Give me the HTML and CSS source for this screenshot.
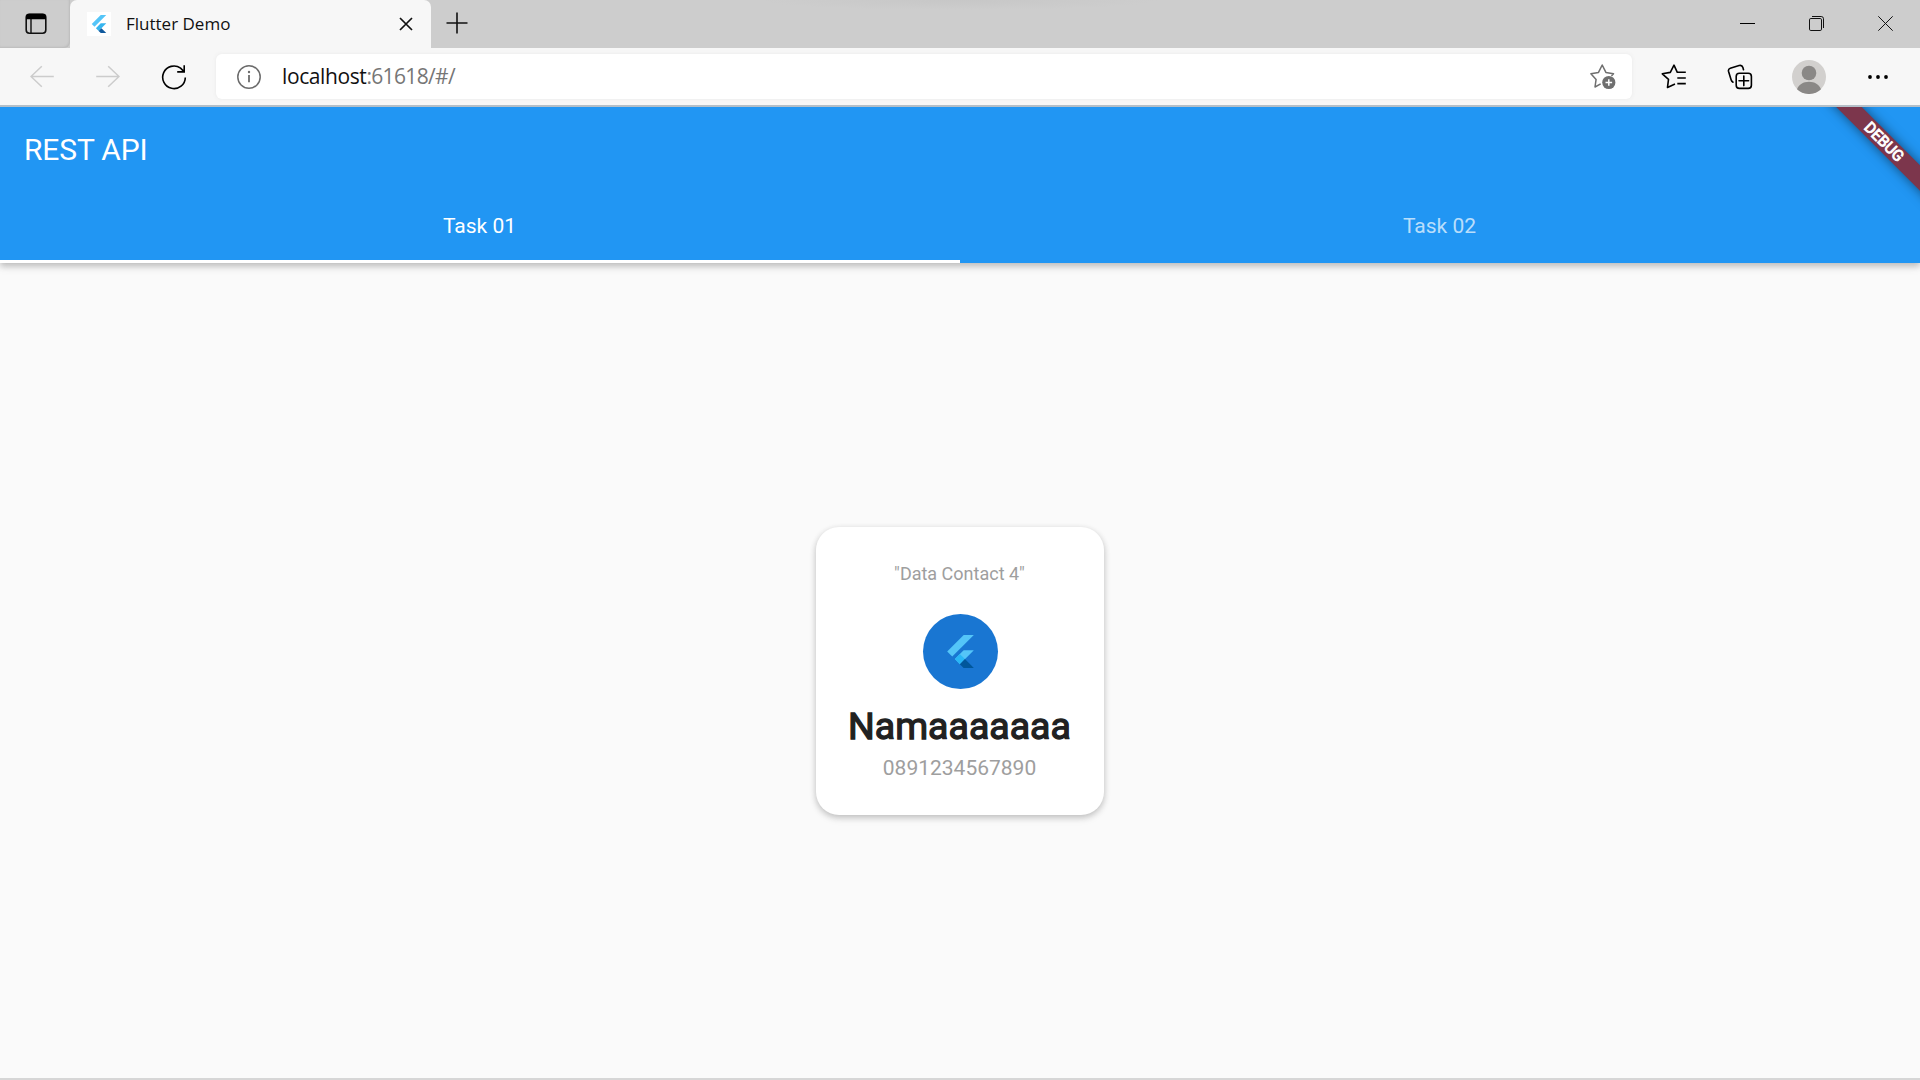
FILE: index.html
```html
<!DOCTYPE html>
<html lang="en">
<head>
<meta charset="utf-8">
<title>Flutter Demo</title>
<link rel="stylesheet" href="styles.css">
</head>
<body>
<div class="window">
  <header class="titlebar">
    <div class="tab-actions">
      <svg width="22" height="22" viewBox="0 0 22 22"><rect x="1.2" y="1.2" width="19.6" height="19" rx="3.2" fill="none" stroke="#111" stroke-width="1.6"/><path d="M1 6.3V4.2A3.4 3.4 0 0 1 4.4.8h13.2A3.4 3.4 0 0 1 21 4.2v2.1z" fill="#000"/><path d="M6 6v14" stroke="#111" stroke-width="1.4"/></svg>
    </div>
    <div class="browser-tab">
      <span class="favicon"><svg width="18" height="18" viewBox="0 0 24 24"><path d="M14.3 0 2.3 12 6 15.7 21.7 0z" fill="#54c5f8"/><path d="M14.3 11.1 7.9 17.5l3.7 3.7L21.7 11.1z" fill="#36b5ef"/><path d="m11.5 21.2 2.8 2.8h7.4l-6.5-6.5z" fill="#10599d"/></svg></span>
      <span class="tab-title">Flutter Demo</span>
      <svg class="tab-close" width="14" height="14" viewBox="0 0 14 14"><path d="m1 1 12 12M13 1 1 13" stroke="#111" stroke-width="1.7"/></svg>
    </div>
    <div class="new-tab"><svg width="22" height="22" viewBox="0 0 22 22"><path d="M11 .5v21M.5 11h21" stroke="#111" stroke-width="1.6"/></svg></div>
    <div class="window-controls">
      <span><svg width="15" height="15" viewBox="0 0 15 15"><path d="M0 7.5h15" stroke="#000"/></svg></span>
      <span><svg width="15" height="15" viewBox="0 0 15 15" fill="none" stroke="#111"><rect x=".5" y="2.5" width="12" height="12" rx="1.3"/><path d="M3 .5h9.2a2.3 2.3 0 0 1 2.3 2.3V12"/></svg></span>
      <span><svg width="15" height="15" viewBox="0 0 15 15"><path d="m.3.3 14.4 14.4M14.7.3.3 14.7" stroke="#111"/></svg></span>
    </div>
  </header>
  <nav class="toolbar">
    <span class="tool"><svg width="24" height="24" viewBox="0 0 24 24" fill="none" stroke="#ccc" stroke-width="1.5"><path d="M23.8 11.5H1M11.8 1.2 1 11.5l10.8 10.2"/></svg></span>
    <span class="tool"><svg width="24" height="24" viewBox="0 0 24 24" fill="none" stroke="#ccc" stroke-width="1.5"><path d="M.2 11.5H23M12.2 1.2 23 11.5 12.2 21.7"/></svg></span>
    <span class="tool"><svg width="26" height="26" viewBox="0 0 26 26" fill="none" stroke="#000" stroke-width="1.6"><path d="M24.3 13.4A11.3 11.3 0 1 1 19.6 4.1L23 7.6M23.2 1.2v6.7h-7"/></svg></span>
    <div class="omnibox">
      <svg width="24" height="24" viewBox="0 0 24 24"><circle cx="12" cy="12" r="11.2" fill="none" stroke="#6b6b6b" stroke-width="1.5"/><path d="M12 10v7.3" stroke="#6b6b6b" stroke-width="1.8"/><circle cx="12" cy="7" r="1.2" fill="#6b6b6b"/></svg>
      <span class="url"><b class="host">localhost</b><span class="path">:61618/#/</span></span>
      <svg class="add-favorite" width="26" height="26" viewBox="0 0 26 26" fill="none" stroke="#6f6f6f" stroke-width="1.5" stroke-linejoin="round" stroke-linecap="round"><path d="M10.2 20.2 5 23 6.1 15.4.9 9.7l7.6-1.3L12.2 1l3.7 7.4 7.6 1.3-1.6 1.7"/><circle cx="18.8" cy="18.5" r="6.6" fill="#6f6f6f" stroke="none"/><path d="M18.8 15.2v6.6M15.5 18.5h6.6" stroke="#fff" stroke-linecap="butt"/></svg>
    </div>
    <div class="tools-end">
      <span class="tool"><svg width="26" height="26" viewBox="0 0 26 26" fill="none" stroke="#000" stroke-width="1.6" stroke-linejoin="round"><path d="m14 20-7.5 3.4 1-8.1L1.3 9.8l8-1.4L13 1.2l3.3 7.1h8.5M16.3 14h8.5M16.3 19.6h8.5"/></svg></span>
      <span class="tool"><svg width="26" height="26" viewBox="0 0 26 26" fill="none" stroke="#000" stroke-width="1.6" stroke-linecap="round"><rect x="9.2" y="9.2" width="15.2" height="15.2" rx="3.2"/><path d="M16.8 12v9.6M12 16.8h9.6M6 18.2C4.8 17.6 4.4 17 4.1 15.8L1.5 7.2C1.2 5.8 1.8 4.8 3.3 4.3l8.8-2.7c2.2-.6 3.2 0 3.8 1.9l.6 2.2"/></svg></span>
      <span class="tool profile"><svg width="34" height="34" viewBox="0 0 34 34"><circle cx="17" cy="17" r="17" fill="#d2d0ce"/><circle cx="17" cy="13" r="7.3" fill="#8a8886"/><path d="M5 29.3C7 24.5 11.3 21.8 17 21.8s10 2.7 12 7.5A17 17 0 0 1 17 34 17 17 0 0 1 5 29.3z" fill="#8a8886"/></svg></span>
      <span class="tool"><svg width="20" height="4" viewBox="0 0 20 4"><circle cx="2" cy="2" r="1.9"/><circle cx="10" cy="2" r="1.9"/><circle cx="18" cy="2" r="1.9"/></svg></span>
    </div>
  </nav>
  <div class="app">
    <div class="appbar">
      <h1 class="app-title">REST API</h1>
      <div class="tabs">
        <div class="tab tab-active">Task 01</div>
        <div class="tab">Task 02</div>
      </div>
    </div>
    <main class="content">
      <section class="card">
        <p class="caption">"Data Contact 4"</p>
        <div class="avatar"><svg width="33" height="33" viewBox="0 0 24 24"><path d="M14.3 0 2.3 12 6 15.7 21.7 0z" fill="#54c5f8"/><path d="M14.3 11.1 7.9 17.5l3.7 3.7L21.7 11.1z" fill="#54c5f8"/><path d="m7.9 17.5 3.6-3.7 3.7 3.7-3.7 3.7z" fill="#29b6f6"/><path d="m11.5 21.2 2.8 2.8h7.4l-6.5-6.5z" fill="#01579b"/></svg></div>
        <h2 class="name">Namaaaaaaa</h2>
        <p class="phone">0891234567890</p>
      </section>
    </main>
    <div class="debug-banner">DEBUG</div>
  </div>
</div>
</body>
</html>
```
FILE: styles.css
```css
* { box-sizing: border-box; }
body { margin: 0; overflow: hidden; }
h1, h2, p { margin: 0; }
svg { display: block; flex: none; }

.window {
  width: 1920px;
  height: 1080px;
  display: flex;
  flex-direction: column;
  background: #fafafa;
  border-bottom: 2px solid #d6d6d6;
  font-family: Roboto, sans-serif;
}

/* browser chrome */
.titlebar {
  height: 48px;
  display: flex;
  background: radial-gradient(ellipse 200px 10px at 960px 0, #c7c7c7, #cdcdcd);
  font-family: "Open Sans", "Noto Sans", sans-serif;
}
.tab-actions {
  width: 70px;
  padding: 13px 0 0 25px;
  border-bottom-right-radius: 6px;
  background: #cdcdcd;
  box-shadow: inset -1px -1px 2px #bbb;
}
.browser-tab {
  width: 361px;
  display: flex;
  align-items: center;
  padding: 0 18px 0 17px;
  background: #f7f7f7;
  border-radius: 7px 7px 0 0;
}
.favicon {
  width: 24px;
  height: 24px;
  display: grid;
  place-items: center;
  background: #fff;
}
.tab-title {
  margin-left: 15px;
  padding-bottom: 2px;
  font-size: 17px;
  color: #111;
}
.tab-close { margin-left: auto; }
.new-tab { padding: 12px 0 0 15px; }
.window-controls {
  display: flex;
  margin-left: auto;
}
.window-controls span {
  width: 69px;
  padding-bottom: 1px;
  display: grid;
  place-items: center;
}
.toolbar {
  height: 59px;
  display: flex;
  align-items: center;
  padding: 0 0 0 9px;
  background: #f7f7f7;
  border-bottom: 2px solid #b4bfc8;
  font-family: "Open Sans", "Noto Sans", sans-serif;
}
.tool {
  width: 66px;
  display: grid;
  place-items: center;
}
.omnibox {
  width: 1416px;
  height: 45px;
  margin-left: 9px;
  display: flex;
  align-items: center;
  padding: 0 16px 0 21px;
  background: #fff;
  border-radius: 6px;
  box-shadow: 0 0 4px #e9e9e9;
}
.url {
  margin-left: 21px;
  padding-bottom: 2px;
  font-size: 21px;
  color: #767676;
}
.host {
  font-weight: 400;
  letter-spacing: -.4px;
  color: #111;
}
.path { letter-spacing: -.65px; }
.add-favorite { margin-left: auto; }
.tools-end {
  display: flex;
  align-items: center;
  margin-left: 9px;
}
.profile { width: 72px; }

/* application */
.app {
  position: relative;
  flex: 1;
  display: flex;
  flex-direction: column;
  overflow: hidden;
}
.appbar {
  height: 156px;
  background: #2196f3;
  color: #fff;
  box-shadow: 0 3px 6px rgba(0, 0, 0, .2), 0 6px 8px rgba(0, 0, 0, .06);
}
.app-title {
  height: 84px;
  padding-left: 24px;
  font-size: 30px;
  line-height: 86px;
  font-weight: 400;
  letter-spacing: -.15px;
}
.tabs { display: flex; }
.tab {
  flex: 1;
  height: 72px;
  padding-right: 1px;
  font-size: 21px;
  line-height: 70px;
  text-align: center;
  color: rgba(255, 255, 255, .7);
}
.tab-active {
  color: #fff;
  border-bottom: 3px solid #fff;
}
.content {
  flex: 1;
  display: grid;
  place-items: center;
}
.card {
  width: 288px;
  height: 288px;
  display: flex;
  flex-direction: column;
  align-items: center;
  padding: 36px 1px 0 0;
  border-radius: 23px;
  background: #fff;
  box-shadow: 0 2px 6px rgba(0, 0, 0, .2), 0 4px 9px rgba(0, 0, 0, .07);
}
.caption {
  font-size: 18px;
  line-height: 21px;
  color: #9e9e9e;
}
.avatar {
  width: 75px;
  height: 75px;
  margin: 30px 0 0 1px;
  display: grid;
  place-items: center;
  border-radius: 50%;
  background: #1976d2;
}
.name {
  margin-top: 15px;
  font-size: 37.5px;
  line-height: 44px;
  font-weight: 400;
  color: #212121;
  -webkit-text-stroke: 1.3px #212121;
}
.phone {
  margin-top: 8px;
  font-size: 21px;
  line-height: 25px;
  color: #9e9e9e;
}
.debug-banner {
  position: absolute;
  top: 26px;
  right: -64px;
  width: 200px;
  height: 18px;
  transform: rotate(45deg);
  background: #7c364c;
  box-shadow: 0 0 12px rgba(0, 0, 0, .5);
  color: #fff;
  font-size: 15.3px;
  line-height: 18px;
  font-weight: 400;
  -webkit-text-stroke: .9px #fff;
  text-align: center;
}
```
